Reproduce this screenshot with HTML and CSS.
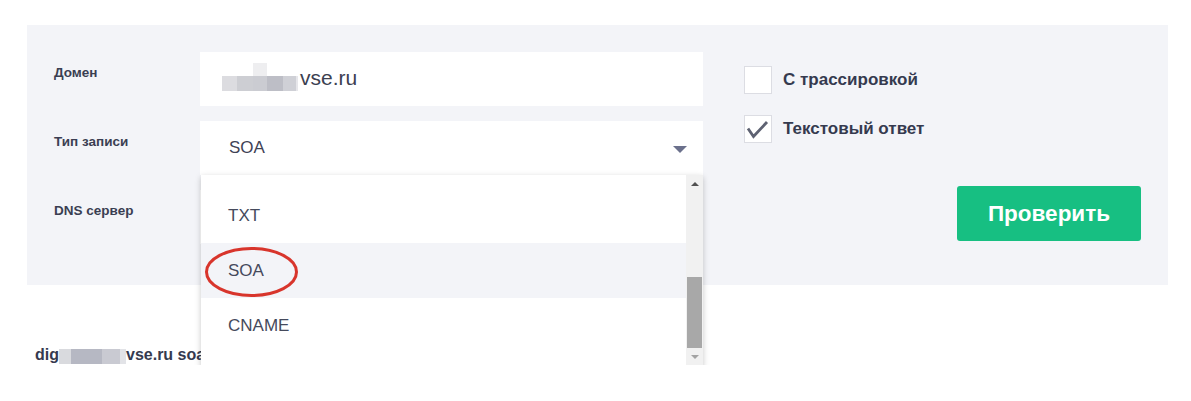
FILE: index.html
```html
<!DOCTYPE html>
<html lang="ru">
<head>
<meta charset="utf-8">
<title>DNS</title>
<link rel="stylesheet" href="styles.css">
</head>
<body>
<div class="panel">
  <div class="form">
    <div class="label">Домен</div>
    <div class="field input"><span class="blur"><i class="b1"></i><i class="b2"></i><i class="b3"></i><i class="b4"></i><i class="b5"></i><i class="b6"></i></span>vse.ru</div>
    <div class="label">Тип записи</div>
    <div class="field select-wrap">
      <div class="select">SOA<span class="caret"></span></div>
      <div class="dropdown">
        <div class="list">
          <div class="opt-gap"></div>
          <div class="opt">TXT</div>
          <div class="opt hover">SOA<svg class="circle" width="95" height="52" viewBox="0 0 95 52"><ellipse cx="47.5" cy="26" rx="45" ry="23.5" fill="none" stroke="#d8352c" stroke-width="3"/></svg></div>
          <div class="opt">CNAME</div>
        </div>
        <div class="scrollbar">
          <span class="arr up"></span>
          <span class="thumb"></span>
          <span class="arr down"></span>
        </div>
      </div>
    </div>
    <div class="label">DNS сервер</div>
    <div class="field input"></div>
  </div>
  <div class="side">
    <label class="check"><span class="box"></span>С трассировкой</label>
    <label class="check"><span class="box"><svg width="28" height="28" viewBox="0 0 28 28"><path d="M4 13.5 L9.5 21.5 L23 7" fill="none" stroke="#5e6272" stroke-width="2.8"/></svg></span>Текстовый ответ</label>
    <button class="btn">Проверить</button>
  </div>
</div>
<div class="cmd">dig<span class="blur2"><i class="c1"></i><i class="c2"></i><i class="c3"></i><i class="c4"></i></span>vse.ru soa</div>
</body>
</html>
```
FILE: styles.css
```css
html, body {
  margin: 0;
  padding: 0;
  background: #ffffff;
  font-family: "Liberation Sans", Arial, sans-serif;
}

.panel {
  margin: 25px 0 0 27px;
  width: 1141px;
  height: 260px;
  box-sizing: border-box;
  padding: 27px 27px 0 27px;
  background: #f3f4f8;
  display: flex;
}

.form {
  display: grid;
  grid-template-columns: 146px 503px;
  grid-auto-rows: 54px;
  row-gap: 15px;
}

.label {
  font-size: 13.5px;
  font-weight: bold;
  color: #3a3e52;
  line-height: 20px;
  padding-top: 11px;
}

.field {
  background: #ffffff;
  box-sizing: border-box;
}

.input {
  display: flex;
  align-items: center;
  padding-left: 22px;
  font-size: 21px;
  color: #3c4051;
  padding-bottom: 2px;
}

.blur {
  display: inline-flex;
  align-items: flex-end;
  height: 26px;
  margin-right: 2px;
}
.blur i {
  display: block;
  height: 15px;
  margin-top: 8px;
}
.blur .b1 { width: 15px; background: #dcdce0; }
.blur .b2 { width: 16px; background: #cdced3; }
.blur .b3 { width: 14px; height: 28px; background: linear-gradient(#eeeef0 0 13px, #cbccd2 13px); }
.blur .b4 { width: 16px; background: #bdbec6; }
.blur .b5 { width: 13px; background: #cfd0d6; }
.blur .b6 { width: 2px; background: #e6e6ea; }

.select-wrap {
  position: relative;
}

.select {
  height: 54px;
  display: flex;
  align-items: center;
  padding-left: 29px;
  font-size: 17px;
  color: #3f4355;
  position: relative;
  padding-bottom: 1px;
  box-sizing: border-box;
}

.caret {
  position: absolute;
  right: 16px;
  top: 25px;
  width: 0;
  height: 0;
  border-left: 7px solid transparent;
  border-right: 7px solid transparent;
  border-top: 7px solid #6b708c;
}

.dropdown {
  position: absolute;
  top: 54px;
  left: 1px;
  width: 502px;
  height: 193px;
  background: #ffffff;
  box-shadow: 0 2px 6px rgba(0, 0, 0, 0.22);
  display: flex;
  overflow: hidden;
  z-index: 5;
}

.list {
  flex: 1;
}

.opt-gap {
  height: 13px;
}

.opt {
  height: 55px;
  display: flex;
  align-items: center;
  padding-left: 27px;
  font-size: 17px;
  color: #454a5c;
  position: relative;
}

.opt.hover {
  background: #f3f4f8;
}

.circle {
  position: absolute;
  left: 3px;
  top: 3px;
}

.scrollbar {
  width: 17px;
  background: #f1f1f1;
  position: relative;
  display: flex;
  flex-direction: column;
  align-items: center;
}

.arr {
  width: 0;
  height: 0;
  border-left: 4px solid transparent;
  border-right: 4px solid transparent;
}
.arr.up {
  margin-top: 7px;
  border-bottom: 4px solid #505050;
}
.arr.down {
  margin-top: 7px;
  border-top: 4px solid #a3a3a3;
}
.thumb {
  width: 15px;
  height: 71px;
  background: #a8a8a8;
  margin-top: 91px;
}

.side {
  flex: 1;
  margin-left: 41px;
  display: flex;
  flex-direction: column;
  align-items: flex-start;
  padding-top: 14px;
}

.check {
  display: flex;
  align-items: center;
  font-size: 17px;
  font-weight: bold;
  color: #353a4f;
  height: 28px;
  margin-bottom: 21px;
}

.box {
  width: 28px;
  height: 28px;
  box-sizing: border-box;
  background: #ffffff;
  border: 1px solid #dcdde3;
  margin-right: 11px;
  position: relative;
}
.box svg {
  position: absolute;
  left: -1px;
  top: -1px;
}

.btn {
  align-self: flex-end;
  margin-top: 22px;
  width: 184px;
  height: 55px;
  border: none;
  border-radius: 3px;
  background: #17bf82;
  color: #ffffff;
  font-family: "Liberation Sans", Arial, sans-serif;
  font-size: 22.5px;
  font-weight: bold;
  padding: 0;
}

.cmd {
  margin: 60px 0 0 35px;
  font-size: 16px;
  font-weight: bold;
  color: #353a4f;
  line-height: 20px;
  display: flex;
  align-items: center;
}

.blur2 {
  display: inline-flex;
  height: 15px;
  margin-top: 2px;
}
.blur2 i { display: block; height: 15px; }
.blur2 .c1 { width: 12px; background: #d9dade; }
.blur2 .c2 { width: 31px; background: #b6b8c3; }
.blur2 .c3 { width: 18px; background: #c9cad2; }
.blur2 .c4 { width: 6px; background: #e2e3e7; }
```
